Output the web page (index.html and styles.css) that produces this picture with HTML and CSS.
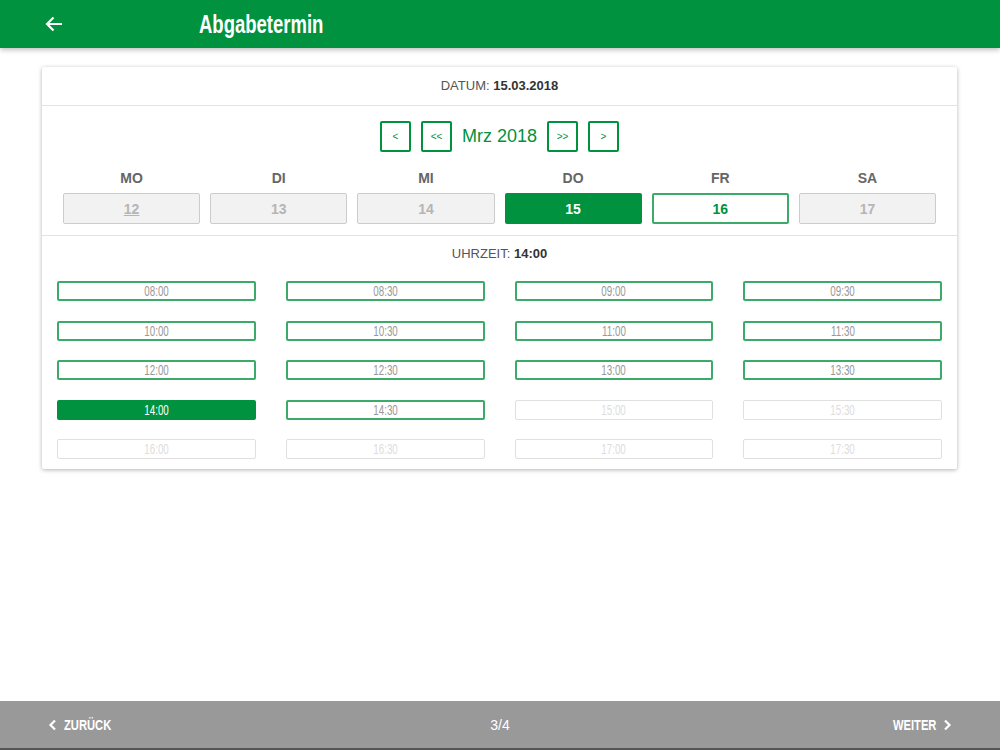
FILE: index.html
```html
<!DOCTYPE html>
<html lang="de">
<head>
    <meta charset="UTF-8">
    <meta name="viewport" content="width=device-width, initial-scale=1.0">
    <title>Abgabetermin</title>
    <link rel="stylesheet" href="styles.css">
</head>
<body>
    <!-- Kopfzeile -->
    <header class="topbar">
        <span class="back-arrow">
            <svg width="18" height="16" viewBox="0 0 18 16"><path d="M17 8H2M8.5 1.5L2 8l6.5 6.5" fill="none" stroke="#fff" stroke-width="2.2"/></svg>
        </span>
        <h1 class="title">Abgabetermin</h1>
    </header>

    <!-- Karte mit Datum und Uhrzeit -->
    <main class="card">
        <div class="date-row">DATUM: <b>15.03.2018</b></div>

        <div class="month-nav">
            <button class="nav-btn">&lt;</button>
            <button class="nav-btn">&lt;&lt;</button>
            <span class="month-label">Mrz 2018</span>
            <button class="nav-btn">&gt;&gt;</button>
            <button class="nav-btn">&gt;</button>
        </div>

        <div class="day-grid">
            <div class="day-name">MO</div>
            <div class="day-name">DI</div>
            <div class="day-name">MI</div>
            <div class="day-name">DO</div>
            <div class="day-name">FR</div>
            <div class="day-name">SA</div>
            <div class="day off"><u>12</u></div>
            <div class="day off">13</div>
            <div class="day off">14</div>
            <div class="day active">15</div>
            <div class="day open">16</div>
            <div class="day off">17</div>
        </div>

        <div class="time-row">UHRZEIT: <b>14:00</b></div>

        <div class="slot-grid">
            <div class="slot"><span>08:00</span></div>
            <div class="slot"><span>08:30</span></div>
            <div class="slot"><span>09:00</span></div>
            <div class="slot"><span>09:30</span></div>
            <div class="slot"><span>10:00</span></div>
            <div class="slot"><span>10:30</span></div>
            <div class="slot"><span>11:00</span></div>
            <div class="slot"><span>11:30</span></div>
            <div class="slot"><span>12:00</span></div>
            <div class="slot"><span>12:30</span></div>
            <div class="slot"><span>13:00</span></div>
            <div class="slot"><span>13:30</span></div>
            <div class="slot active"><span>14:00</span></div>
            <div class="slot"><span>14:30</span></div>
            <div class="slot off"><span>15:00</span></div>
            <div class="slot off"><span>15:30</span></div>
            <div class="slot off"><span>16:00</span></div>
            <div class="slot off"><span>16:30</span></div>
            <div class="slot off"><span>17:00</span></div>
            <div class="slot off"><span>17:30</span></div>
        </div>
    </main>

    <!-- Fußzeile -->
    <footer class="bottombar">
        <span class="foot-link">
            <svg width="9" height="12" viewBox="0 0 9 12"><path d="M7 1.5L2.5 6 7 10.5" fill="none" stroke="#fff" stroke-width="2.2"/></svg>
            <span class="narrow">ZURÜCK</span>
        </span>
        <span class="pager">3/4</span>
        <span class="foot-link right">
            <span class="narrow">WEITER</span>
            <svg width="9" height="12" viewBox="0 0 9 12"><path d="M2 1.5L6.5 6 2 10.5" fill="none" stroke="#fff" stroke-width="2.2"/></svg>
        </span>
    </footer>
</body>
</html>
```

FILE: styles.css
```css
/* Grundlayout */
body {
    margin: 0;
    font-family: 'Liberation Sans', Arial, sans-serif;
    color: #555;
    background-color: #fff;
    height: 750px;
}

/* Kopfzeile */
.topbar {
    height: 48px;
    background-color: #00923f;
    display: flex;
    align-items: center;
    box-shadow: 0 2px 5px rgba(0, 0, 0, 0.25);
}

.back-arrow {
    display: flex;
    margin-left: 45px;
    width: 154px;
}

.title {
    margin: 0;
    color: #fff;
    font-size: 25px;
    font-weight: bold;
    transform: scaleX(0.74);
    transform-origin: left center;
}

/* Karte */
.card {
    display: block;
    margin: 19px 0 0 42px;
    width: 915px;
    box-shadow: 0 1px 4px rgba(0, 0, 0, 0.3);
    border-radius: 2px;
}

.date-row, .time-row {
    text-align: center;
    font-size: 13px;
    color: #555;
}

.date-row b, .time-row b {
    color: #333;
}

.date-row {
    line-height: 38px;
    border-bottom: 1px solid #e3e3e3;
}

/* Monatsnavigation */
.month-nav {
    display: flex;
    justify-content: center;
    align-items: center;
    gap: 10px;
    padding-top: 15px;
}

.nav-btn {
    width: 31px;
    height: 31px;
    padding: 0;
    background: #fff;
    border: 2px solid #00923f;
    border-radius: 2px;
    color: #00923f;
    font-family: 'Liberation Sans', Arial, sans-serif;
    font-size: 10px;
}

.month-label {
    color: #00923f;
    font-size: 18px;
}

/* Wochentage */
.day-grid {
    display: grid;
    grid-template-columns: repeat(6, 1fr);
    column-gap: 10px;
    row-gap: 7px;
    padding: 18px 21px 11px;
    border-bottom: 1px solid #e3e3e3;
}

.day-name {
    text-align: center;
    font-size: 14px;
    font-weight: bold;
    color: #666;
    line-height: 16px;
}

.day {
    height: 31px;
    box-sizing: border-box;
    display: flex;
    justify-content: center;
    align-items: center;
    font-size: 14px;
    font-weight: bold;
    border-radius: 2px;
}

.day.off {
    background-color: #f2f2f2;
    border: 1px solid #ccc;
    color: #b5b5b5;
}

.day.active {
    background-color: #00923f;
    color: #fff;
}

.day.open {
    border: 2px solid #3caa68;
    color: #00923f;
}

/* Uhrzeiten */
.time-row {
    padding-top: 10px;
    line-height: 16px;
}

.slot-grid {
    display: grid;
    grid-template-columns: repeat(4, 1fr);
    column-gap: 30px;
    row-gap: 19.5px;
    padding: 19px 15px 10px;
}

.slot {
    height: 20px;
    box-sizing: border-box;
    border: 2px solid #3caa68;
    border-radius: 2px;
    display: flex;
    justify-content: center;
    align-items: center;
    font-size: 14px;
    color: #999;
}

.slot span {
    display: inline-block;
    transform: scaleX(0.7);
}

.slot.active {
    background-color: #00923f;
    border-color: #00923f;
    color: #fff;
}

.slot.off {
    border: 1px solid #e0e0e0;
    color: #ddd;
}

/* Fußzeile */
.bottombar {
    position: fixed;
    left: 0;
    right: 0;
    bottom: 0;
    height: 49px;
    background-color: #999;
    border-bottom: 2px solid #555;
    box-sizing: border-box;
    display: flex;
    align-items: center;
    padding: 0 48px;
}

.foot-link {
    flex: 1;
    display: flex;
    align-items: center;
    gap: 7px;
    color: #fff;
    font-size: 14px;
    font-weight: bold;
}

.foot-link.right {
    justify-content: flex-end;
}

.foot-link svg {
    flex-shrink: 0;
}

.foot-link .narrow {
    display: inline-block;
    transform: scaleX(0.8);
    transform-origin: left center;
}

.foot-link.right .narrow {
    transform-origin: right center;
}

.pager {
    color: #fff;
    font-size: 14px;
}
```
